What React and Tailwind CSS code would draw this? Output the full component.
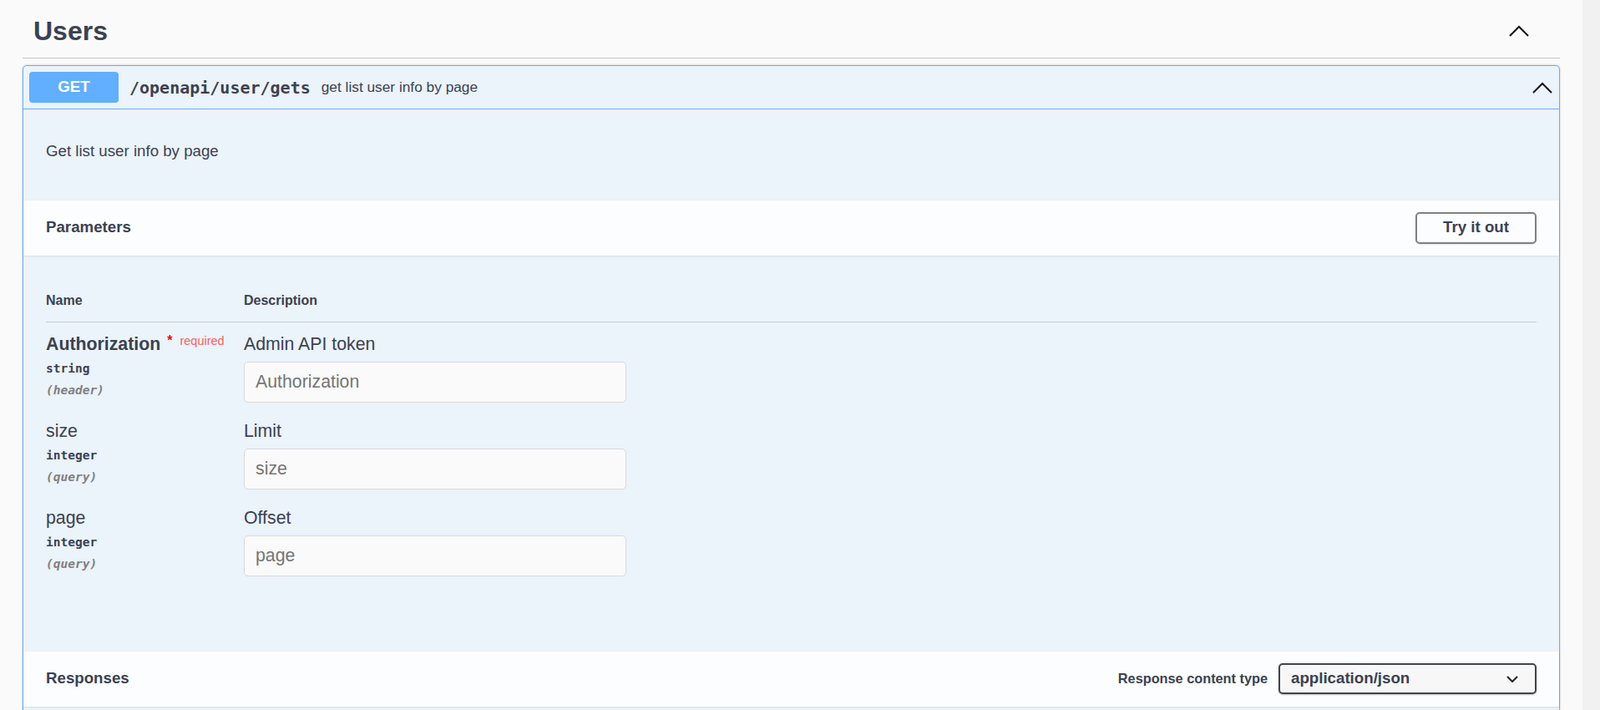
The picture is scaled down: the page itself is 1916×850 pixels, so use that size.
import React from 'react';

const params = [
  { name: 'Authorization', required: true, type: 'string', where: '(header)', desc: 'Admin API token' },
  { name: 'size', required: false, type: 'integer', where: '(query)', desc: 'Limit' },
  { name: 'page', required: false, type: 'integer', where: '(query)', desc: 'Offset' },
];

const ChevronUp = () => (
  <svg width="24" height="14" viewBox="0 0 24 14" fill="none">
    <polyline points="1,13 12,2 23,13" stroke="#111" strokeWidth="2" />
  </svg>
);

const ParamRow = ({ p }) => (
  <div className="grid grid-cols-[237px_1fr] pt-[14px] pb-[8px]">
    <div>
      <div className="flex items-start leading-[24px]">
        <span className={`text-[21.3px] ${p.required ? 'font-bold' : ''}`}>{p.name}</span>
        {p.required && (
          <span className="ml-[8px] flex items-start leading-[16px]">
            <span className="text-[16px] font-bold text-[#ff0000]">*</span>
            <span className="ml-[9px] text-[14.5px] text-[#f76164]">required</span>
          </span>
        )}
      </div>
      <div className="mt-[8px] font-['DejaVu_Sans_Mono',monospace] text-[14.5px] font-bold leading-[18px]">
        {p.type}
      </div>
      <div className="mt-[8px] font-['DejaVu_Sans_Mono',monospace] text-[14.5px] font-semibold italic leading-[18px] text-[#808080]">
        {p.where}
      </div>
    </div>
    <div>
      <div className="text-[21.3px] leading-[24px]">{p.desc}</div>
      <input
        placeholder={p.name}
        className="mt-[9px] h-[49px] w-[458px] rounded-[5px] border border-[#d9d9d9] bg-[#fafafa] px-[13px] text-[21.3px] outline-none placeholder:text-[#757575]"
      />
    </div>
  </div>
);

export default function App() {
  return (
    <div className="flex h-[850px] overflow-hidden bg-[#fafafa] font-['Liberation_Sans',Arial,sans-serif] text-[#3b4151]">
      <div className="flex-1 px-[27px]">
        {/* Tag header */}
        <div className="flex h-[70px] items-center justify-between border-b border-[#c4c6ca] pl-[13px] pr-[37px] pt-[4px]">
          <h4 className="pt-[1px] text-[32px] font-bold">Users</h4>
          <ChevronUp />
        </div>

        {/* Operation block */}
        <div className="mt-[8px] rounded-[5px] border border-[#61affe] bg-[#ebf3fb] shadow-[0_0_3px_rgba(0,0,0,0.19)]">
          <div className="flex h-[52px] items-center border-b border-[#61affe] pl-[7px] pr-[8px]">
            <span className="flex h-[37px] w-[107px] items-center justify-center rounded-[4px] bg-[#61affe] text-[18.7px] font-bold text-white">
              GET
            </span>
            <span className="ml-[13px] font-['DejaVu_Sans_Mono',monospace] text-[20px] font-bold">
              /openapi/user/gets
            </span>
            <span className="ml-[13px] text-[17.3px]">get list user info by page</span>
            <span className="ml-auto">
              <ChevronUp />
            </span>
          </div>

          <div className="px-[27px] pt-[39px] pb-[48px] text-[18.7px] leading-[21.5px]">
            Get list user info by page
          </div>

          {/* Parameters */}
          <div className="flex h-[66px] items-center justify-between bg-[#fbfdfe] px-[27px] shadow-[0_1px_2px_rgba(0,0,0,0.1)]">
            <h4 className="text-[18.7px] font-bold">Parameters</h4>
            <button className="h-[38px] w-[145px] rounded-[5px] border-2 border-[#808080] bg-transparent text-[18.7px] font-bold shadow-[0_1px_2px_rgba(0,0,0,0.1)]">
              Try it out
            </button>
          </div>

          <div className="px-[27px] pt-[29px] pb-[82px]">
            <div className="grid grid-cols-[237px_1fr] border-b border-[#c5cbd5] py-[16px] text-[16px] font-bold leading-[18px]">
              <div>Name</div>
              <div>Description</div>
            </div>
            {params.map((p) => (
              <ParamRow key={p.name} p={p} />
            ))}
          </div>

          {/* Responses */}
          <div className="flex h-[66px] items-center justify-between bg-[#fbfdfe] px-[27px] shadow-[0_1px_2px_rgba(0,0,0,0.1)]">
            <h4 className="text-[18.7px] font-bold">Responses</h4>
            <div className="flex items-center">
              <span className="mr-[13px] text-[16.3px] font-bold">Response content type</span>
              <div className="flex h-[37px] w-[309px] items-center justify-between rounded-[5px] border-2 border-[#41444e] bg-[#f7f7f7] pl-[13px] pr-[20px] shadow-[0_1px_2px_rgba(0,0,0,0.25)]">
                <span className="text-[18.7px] font-bold">application/json</span>
                <svg width="14" height="8" viewBox="0 0 14 8" fill="none">
                  <polyline points="1,1 7,7 13,1" stroke="#222" strokeWidth="2" />
                </svg>
              </div>
            </div>
          </div>
          <div className="h-[120px]" />
        </div>
      </div>
      <div className="w-[21px] bg-[#f1f1f1]" />
    </div>
  );
}
